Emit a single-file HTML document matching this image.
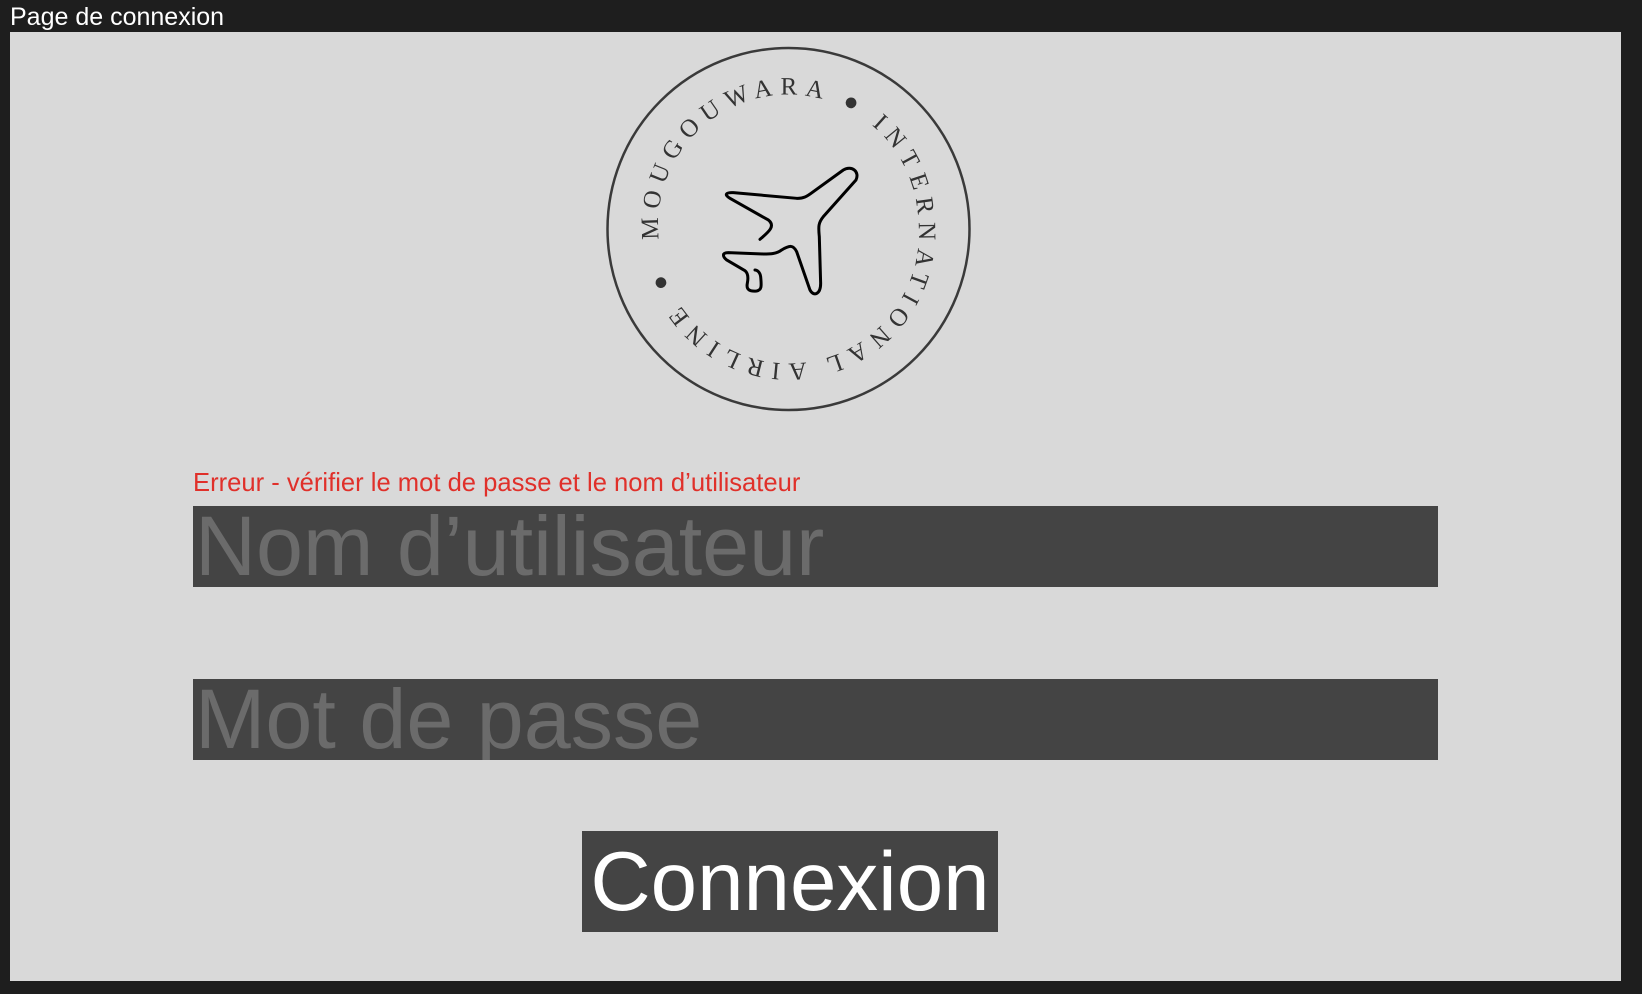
<!DOCTYPE html>
<html><head><meta charset="utf-8"><style>
html,body{margin:0;padding:0;background:#1e1e1e;width:1642px;height:994px;overflow:hidden;font-family:"Liberation Sans",sans-serif}
.title{position:absolute;left:10px;top:3px;color:#fff;font-size:25px}
.frame{position:absolute;left:10px;top:32px;width:1611px;height:949px;background:#d9d9d9}
.err{position:absolute;left:193px;top:469px;color:#e0302a;font-size:25.6px}
.inp{position:absolute;left:193px;width:1245px;height:81px;background:#444;color:#6b6b6b;font-size:84.5px;line-height:81px;overflow:hidden;white-space:nowrap;padding-left:2px;box-sizing:border-box}
.btn{position:absolute;left:582px;top:831px;width:416px;height:101px;background:#444;color:#fff;font-size:83.5px;line-height:101px;text-align:center}
svg{position:absolute;left:0;top:0}
</style></head><body>
<div class="title">Page de connexion</div>
<div class="frame"></div>
<svg width="1642" height="994">
<circle cx="788.5" cy="229" r="181" fill="none" stroke="#3a3a3a" stroke-width="2.5"/>
<defs><path id="ring" d="M659,239.5 A130,130 0 1,1 918,218.5 A130,130 0 1,1 659,239.5"/></defs>
<text font-family="Liberation Serif,serif" font-size="25" fill="#333"><textPath href="#ring" textLength="800" lengthAdjust="spacing">MOUGOUWARA ● INTERNATIONAL AIRLINE ●</textPath></text>
<g transform="translate(580,30) scale(0.3333)" fill="none" stroke="#000" stroke-width="9" stroke-linecap="round" stroke-linejoin="round">
<path d="M540,628 C560,610 590,590 565,570 L450,505 C430,493 440,487 460,488 L650,505 C670,506 680,500 700,485 L790,420 C815,405 840,425 828,450 L730,560 C715,578 715,590 718,620 L722,760 C722,795 700,800 690,780 L650,665 C640,645 630,645 605,660 C590,672 570,672 550,672 L445,668 C425,668 428,680 440,690 L495,722 C505,730 505,745 502,760 C498,780 510,785 530,783 C545,780 545,770 542,740 C540,725 530,720 525,720"/>
</g>
</svg>
<div class="err">Erreur - vérifier le mot de passe et le nom d’utilisateur</div>
<div class="inp" style="top:506px">Nom d’utilisateur</div>
<div class="inp" style="top:679px">Mot de passe</div>
<div class="btn">Connexion</div>
</body></html>
